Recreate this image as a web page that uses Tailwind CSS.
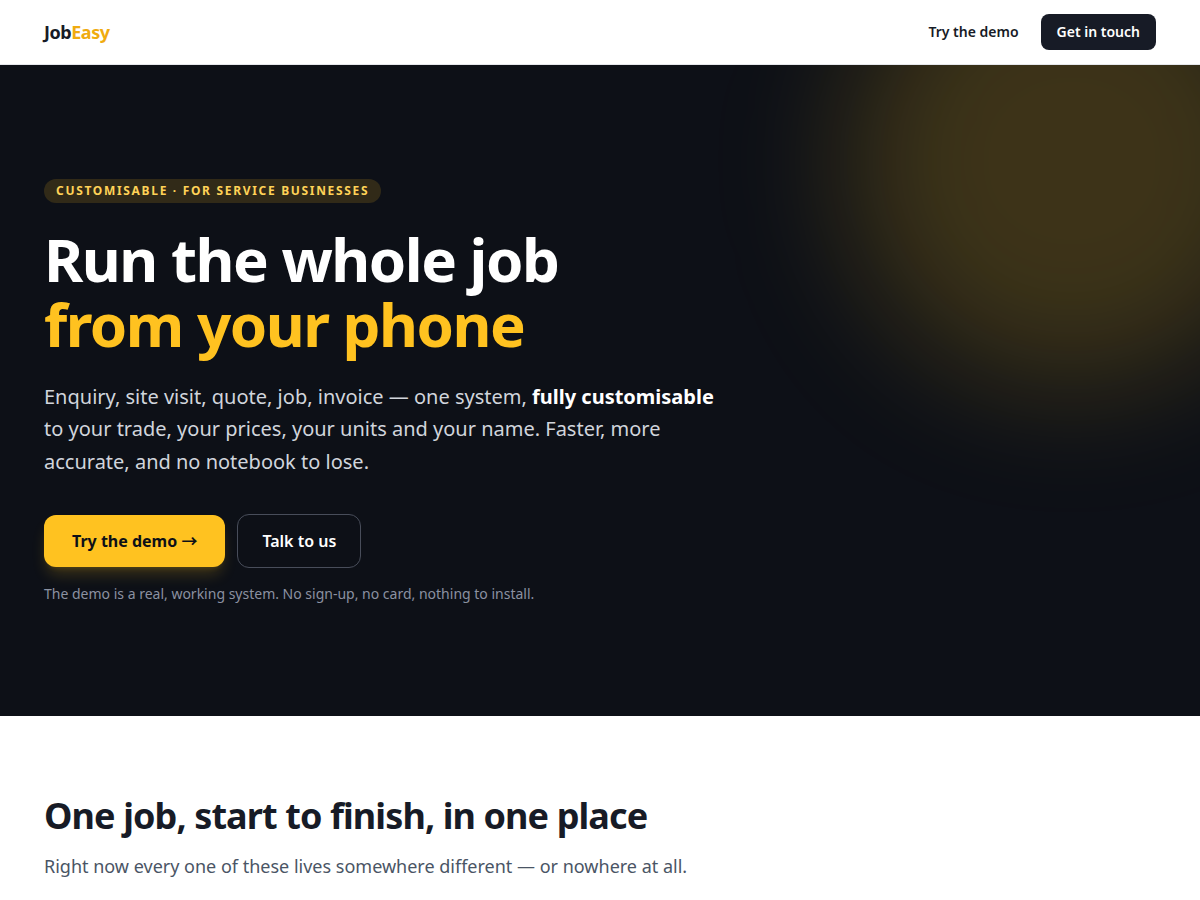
<!DOCTYPE html>
<html lang="en">
<head>
    <meta charset="UTF-8">
    <meta name="viewport" content="width=device-width, initial-scale=1.0">
    <title>JobEasy</title>
    <script src="https://cdn.jsdelivr.net/npm/@tailwindcss/browser@4"></script>
</head>
<body class="bg-white font-['Noto_Sans',sans-serif] text-[#171b26] antialiased">

    <header class="border-b border-gray-200 bg-white">
        <div class="mx-auto flex h-16 max-w-6xl items-center justify-between px-5">
            <a href="#" class="text-lg font-bold tracking-tight">Job<span class="text-[#f0ab10]">Easy</span></a>
            <nav class="flex items-center gap-1.5 text-sm font-semibold">
                <a href="#demo" class="px-4 py-2">Try the demo</a>
                <a href="#contact" class="rounded-lg bg-[#171b26] px-4 py-2 text-white">Get in touch</a>
            </nav>
        </div>
    </header>

    <main>
        <section class="relative overflow-hidden bg-[#0d1017] text-white">
            <div class="absolute -top-32 -right-24 size-112 rounded-full bg-[#ffc220]/20 blur-3xl"></div>
            <div class="relative mx-auto max-w-6xl px-5 py-28">
                <p class="inline-block rounded-full bg-[#ffc220]/15 px-3 py-1 text-xs font-bold tracking-[0.14em] text-[#ffd257] uppercase">Customisable · for service businesses</p>
                <h1 class="mt-6 text-6xl leading-[1.08] font-bold tracking-tight">Run the whole job<br><span class="text-[#ffc220]">from your phone</span></h1>
                <p class="mt-6 max-w-2xl text-xl leading-relaxed text-gray-300">Enquiry, site visit, quote, job, invoice — one system, <strong class="font-bold text-white">fully customisable</strong> to your trade, your prices, your units and your name. Faster, more accurate, and no notebook to lose.</p>
                <div class="mt-9 flex items-center gap-3">
                    <a href="#demo" class="rounded-xl bg-[#ffc220] px-7 py-3.5 font-bold text-[#0d1017] shadow-lg shadow-[#ffc220]/20">Try the demo <span class="font-['Noto_Sans_CJK_JP',sans-serif] leading-none">→</span></a>
                    <a href="#contact" class="rounded-xl border border-[#484d5a] px-6 py-3.5 font-semibold">Talk to us</a>
                </div>
                <p class="mt-4 text-sm text-[#8b91a1]">The demo is a real, working system. No sign-up, no card, nothing to install.</p>
            </div>
        </section>

        <section class="mx-auto max-w-6xl px-5 py-20">
            <h2 class="text-4xl font-bold tracking-tight">One job, start to finish, in one place</h2>
            <p class="mt-4 text-lg text-gray-600">Right now every one of these lives somewhere different — or nowhere at all.</p>
        </section>
    </main>

</body>
</html>
